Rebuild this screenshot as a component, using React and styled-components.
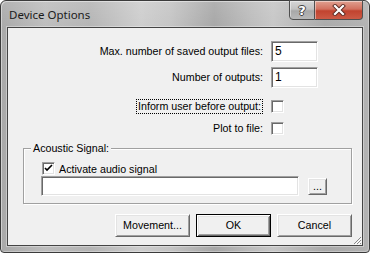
import styled, { createGlobalStyle } from "styled-components";

const GlobalStyle = createGlobalStyle`
  body {
    margin: 0;
    background: #ffffff;
  }
  * {
    box-sizing: border-box;
  }
`;

const Window = styled.div`
  position: relative;
  width: 370px;
  height: 253px;
  border: 1px solid #3b3b3b;
  border-radius: 6px 6px 4px 4px;
  padding: 0 6px 6px;
  display: flex;
  flex-direction: column;
  background:
    linear-gradient(rgba(255, 255, 255, 0.12), rgba(255, 255, 255, 0) 30px),
    linear-gradient(
      90deg,
      #a9a9a9 0%,
      #bdbdbd 12%,
      #b4b4b4 24%,
      #cdcdcd 38%,
      #c4c4c4 46%,
      #a6a6a6 58%,
      #bcbcbc 68%,
      #c6c6c6 74%,
      #a9a9a9 88%,
      #b2b2b2 100%
    );
  box-shadow: inset 1px 1px 0 rgba(255, 255, 255, 0.45),
    inset -1px -1px 0 rgba(255, 255, 255, 0.3);
  font-family: "Liberation Sans", Arial, sans-serif;
  font-size: 10.7px;
  color: #000;
`;

const TitleBar = styled.div`
  height: 26px;
  display: flex;
  align-items: flex-start;
`;

const Title = styled.div`
  flex: 1;
  padding: 6px 0 0 2px;
  font-family: "Noto Sans", sans-serif;
  font-size: 11.5px;
  line-height: 16px;
  color: #1b1b1b;
`;

const CaptionButtons = styled.div`
  display: flex;
  margin-top: -1px;
`;

const CaptionButton = styled.div`
  width: ${(p) => (p.$close ? "48px" : "26px")};
  height: 20px;
  border: 1px solid #4f4f4f;
  border-left: ${(p) => (p.$close ? "none" : "1px solid #4f4f4f")};
  border-radius: ${(p) => (p.$close ? "0 0 4px 0" : "0 0 0 4px")};
  display: flex;
  align-items: center;
  justify-content: center;
  background: ${(p) =>
    p.$close
      ? "linear-gradient(#e0a191, #d2715f 45%, #c1432f 55%, #cc5a45)"
      : "linear-gradient(#d6d6d6, #c2c2c2 45%, #a8a8a8 55%, #b8b8b8)"};
  box-shadow: inset 1px 1px 0 rgba(255, 255, 255, 0.45);
`;

const HelpGlyph = styled.span`
  font-family: "DejaVu Sans", sans-serif;
  font-weight: bold;
  font-size: 13px;
  line-height: 13px;
  color: #fff;
  text-shadow: -1px 0 #444, 1px 0 #444, 0 -1px #444, 0 1px #444;
`;

const Client = styled.div`
  position: relative;
  flex: 1;
  border: 1px solid #444;
  background: #f0f0f0;
  display: flex;
  flex-direction: column;
  box-shadow: 0 0 0 1px rgba(255, 255, 255, 0.35);
`;

const Form = styled.div`
  padding: 13px 44px 0 0;
  display: flex;
  flex-direction: column;
`;

const Row = styled.div`
  display: flex;
  justify-content: flex-end;
  align-items: center;
  gap: 8px;
  height: ${(p) => p.$h}px;
  margin-top: ${(p) => p.$top || 0}px;
`;

const Label = styled.span`
  white-space: nowrap;
  padding: ${(p) => (p.$focus ? "0 1px" : "0")};
  border: ${(p) => (p.$focus ? "1px dotted #000" : "none")};
  line-height: 13px;
`;

const Slot = styled.div`
  width: 47px;
  display: flex;
  align-items: center;
`;

const Field = styled.div`
  width: ${(p) => p.$w}px;
  height: ${(p) => p.$h}px;
  background: #fff;
  border: 1px solid;
  border-color: #a0a0a0 #fff #fff #a0a0a0;
  box-shadow: inset 1px 1px 0 #696969, inset -1px -1px 0 #e3e3e3;
  padding: 2px 0 0 3px;
  font-size: 12px;
  line-height: 15px;
`;

const Check = styled.div`
  width: 13px;
  height: 13px;
  flex: none;
  background: #fff;
  border: 1px solid;
  border-color: #a0a0a0 #fff #fff #a0a0a0;
  box-shadow: inset 1px 1px 0 #696969, inset -1px -1px 0 #e3e3e3;
  display: flex;
  align-items: center;
  justify-content: center;
`;

const Group = styled.div`
  position: relative;
  margin: 12px 10px 0 15px;
  height: 56px;
  border: 1px solid #a0a0a0;
  box-shadow: inset 1px 1px 0 #fff, 1px 1px 0 #fff;
  padding: 13px 24px 0 17px;
  display: flex;
  flex-direction: column;
  gap: 1px;
`;

const Legend = styled.span`
  position: absolute;
  left: 7px;
  top: -7px;
  padding: 0 2px;
  background: #f0f0f0;
  line-height: 13px;
`;

const CheckRow = styled.div`
  display: flex;
  align-items: center;
  gap: 4px;
  height: 13px;
  padding-left: 1px;
`;

const FieldRow = styled.div`
  display: flex;
  align-items: center;
  gap: 9px;
  height: 20px;
`;

const Button = styled.div`
  width: ${(p) => p.$w}px;
  height: ${(p) => p.$h}px;
  background: #f0f0f0;
  display: flex;
  align-items: center;
  justify-content: center;
  line-height: 13px;
  border: 1px solid ${(p) => (p.$default ? "#000" : "transparent")};
  box-shadow: ${(p) =>
    p.$default
      ? "inset 1px 1px 0 #fff, inset -1px -1px 0 #696969, inset 2px 2px 0 #e3e3e3, inset -2px -2px 0 #a0a0a0"
      : "none"};
  ${(p) =>
    !p.$default &&
    `
    border-color: #fff #696969 #696969 #fff;
    box-shadow: inset 1px 1px 0 #e3e3e3, inset -1px -1px 0 #a0a0a0;
  `}
`;

const ButtonBar = styled.div`
  display: flex;
  justify-content: flex-end;
  gap: 6px;
  margin-top: 10px;
  padding-right: 10px;
`;

const Grip = styled.svg`
  position: absolute;
  right: 0;
  bottom: 0;
`;

const CheckMark = () => (
  <svg width="9" height="9" viewBox="0 0 9 9">
    <path d="M1 4 L3 6 L8 1" fill="none" stroke="#000" strokeWidth="1.6" />
  </svg>
);

const CloseGlyph = () => (
  <svg width="14" height="12" viewBox="0 0 14 12">
    <path d="M3 2 L11 10 M11 2 L3 10" stroke="#5a2a22" strokeWidth="4" strokeLinecap="square" />
    <path d="M3 2 L11 10 M11 2 L3 10" stroke="#fff" strokeWidth="2.2" strokeLinecap="square" />
  </svg>
);

export default function App() {
  return (
    <>
      <GlobalStyle />
      <Window>
        <TitleBar>
          <Title>Device Options</Title>
          <CaptionButtons>
            <CaptionButton>
              <HelpGlyph>?</HelpGlyph>
            </CaptionButton>
            <CaptionButton $close>
              <CloseGlyph />
            </CaptionButton>
          </CaptionButtons>
        </TitleBar>
        <Client>
          <Form>
            <Row $h={21}>
              <Label>Max. number of saved output files:</Label>
              <Slot>
                <Field $w={47} $h={21}>5</Field>
              </Slot>
            </Row>
            <Row $h={21} $top={5}>
              <Label>Number of outputs:</Label>
              <Slot>
                <Field $w={47} $h={21}>1</Field>
              </Slot>
            </Row>
            <Row $h={16} $top={10}>
              <Label $focus>Inform user before output:</Label>
              <Slot>
                <Check />
              </Slot>
            </Row>
            <Row $h={16} $top={6}>
              <Label>Plot to file:</Label>
              <Slot>
                <Check />
              </Slot>
            </Row>
          </Form>
          <Group>
            <Legend>Acoustic Signal:</Legend>
            <CheckRow>
              <Check>
                <CheckMark />
              </Check>
              <span>Activate audio signal</span>
            </CheckRow>
            <FieldRow>
              <Field $w={258} $h={20} />
              <Button $w={19} $h={17}>...</Button>
            </FieldRow>
          </Group>
          <ButtonBar>
            <Button $w={75} $h={23}>Movement...</Button>
            <Button $w={75} $h={23} $default>OK</Button>
            <Button $w={75} $h={23}>Cancel</Button>
          </ButtonBar>
          <Grip width="9" height="9" viewBox="0 0 9 9">
            <path d="M8 1 L1 8 M8 4 L4 8 M8 7 L7 8" stroke="#8a8a8a" strokeWidth="1" />
            <path d="M9 2 L2 9 M9 5 L5 9" stroke="#fff" strokeWidth="1" />
          </Grip>
        </Client>
      </Window>
    </>
  );
}
